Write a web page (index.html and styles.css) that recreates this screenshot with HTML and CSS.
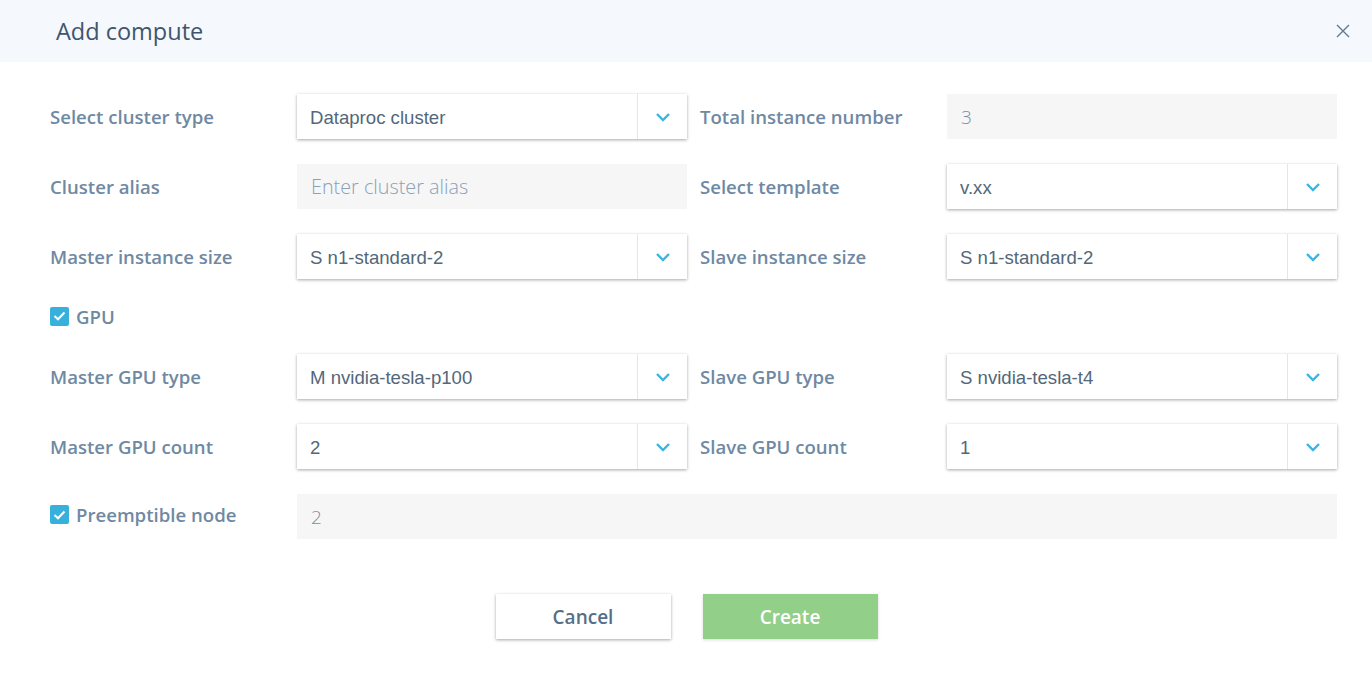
FILE: index.html
```html
<!DOCTYPE html>
<html>
<head>
<meta charset="utf-8">
<link rel="stylesheet" href="styles.css">
</head>
<body>
<div class="dialog">
  <header class="head">
    <h1 class="title">Add compute</h1>
    <button class="close" aria-label="Close">
      <svg width="16" height="16" viewBox="0 0 16 16"><path d="M2 2L14 14M14 2L2 14" stroke="#5f7a92" stroke-width="1.4" fill="none"/></svg>
    </button>
  </header>
  <div class="form">
    <div class="row">
      <div class="field"><label class="label">Select cluster type</label>
        <div class="select"><span class="val">Dataproc cluster</span><span class="arrow"><svg width="16" height="10" viewBox="0 0 16 10"><path d="M2 2L8 8L14 2" stroke="#3ab4e0" stroke-width="2.4" fill="none"/></svg></span></div></div>
      <div class="field"><label class="label">Total instance number</label>
        <div class="input disabled">3</div></div>
    </div>
    <div class="row">
      <div class="field"><label class="label">Cluster alias</label>
        <div class="input placeholder">Enter cluster alias</div></div>
      <div class="field"><label class="label">Select template</label>
        <div class="select"><span class="val">v.xx</span><span class="arrow"><svg width="16" height="10" viewBox="0 0 16 10"><path d="M2 2L8 8L14 2" stroke="#3ab4e0" stroke-width="2.4" fill="none"/></svg></span></div></div>
    </div>
    <div class="row">
      <div class="field"><label class="label">Master instance size</label>
        <div class="select"><span class="val">S n1-standard-2</span><span class="arrow"><svg width="16" height="10" viewBox="0 0 16 10"><path d="M2 2L8 8L14 2" stroke="#3ab4e0" stroke-width="2.4" fill="none"/></svg></span></div></div>
      <div class="field"><label class="label">Slave instance size</label>
        <div class="select"><span class="val">S n1-standard-2</span><span class="arrow"><svg width="16" height="10" viewBox="0 0 16 10"><path d="M2 2L8 8L14 2" stroke="#3ab4e0" stroke-width="2.4" fill="none"/></svg></span></div></div>
    </div>
    <div class="check-row">
      <span class="check"><svg width="13" height="10" viewBox="0 0 13 10"><path d="M1.5 5L5 8.3L11.5 1.5" stroke="#fff" stroke-width="2" fill="none"/></svg></span>
      <span class="label">GPU</span>
    </div>
    <div class="row">
      <div class="field"><label class="label">Master GPU type</label>
        <div class="select"><span class="val">M nvidia-tesla-p100</span><span class="arrow"><svg width="16" height="10" viewBox="0 0 16 10"><path d="M2 2L8 8L14 2" stroke="#3ab4e0" stroke-width="2.4" fill="none"/></svg></span></div></div>
      <div class="field"><label class="label">Slave GPU type</label>
        <div class="select"><span class="val">S nvidia-tesla-t4</span><span class="arrow"><svg width="16" height="10" viewBox="0 0 16 10"><path d="M2 2L8 8L14 2" stroke="#3ab4e0" stroke-width="2.4" fill="none"/></svg></span></div></div>
    </div>
    <div class="row">
      <div class="field"><label class="label">Master GPU count</label>
        <div class="select"><span class="val">2</span><span class="arrow"><svg width="16" height="10" viewBox="0 0 16 10"><path d="M2 2L8 8L14 2" stroke="#3ab4e0" stroke-width="2.4" fill="none"/></svg></span></div></div>
      <div class="field"><label class="label">Slave GPU count</label>
        <div class="select"><span class="val">1</span><span class="arrow"><svg width="16" height="10" viewBox="0 0 16 10"><path d="M2 2L8 8L14 2" stroke="#3ab4e0" stroke-width="2.4" fill="none"/></svg></span></div></div>
    </div>
    <div class="row wide">
      <div class="check-label">
        <span class="check"><svg width="13" height="10" viewBox="0 0 13 10"><path d="M1.5 5L5 8.3L11.5 1.5" stroke="#fff" stroke-width="2" fill="none"/></svg></span>
        <span class="label">Preemptible node</span>
      </div>
      <div class="input disabled">2</div>
    </div>
  </div>
  <div class="actions">
    <button class="btn cancel">Cancel</button>
    <button class="btn create">Create</button>
  </div>
</div>
</body>
</html>
```
FILE: styles.css
```css
* { box-sizing: border-box; }
html, body { margin: 0; padding: 0; background: #fff; }
body { font-family: "Open Sans", "Noto Sans", sans-serif; width: 1372px; height: 678px; overflow: hidden; }
.dialog { width: 1372px; }
.head {
  height: 62px;
  background: #f5f8fc;
  display: flex;
  align-items: center;
  justify-content: space-between;
  padding: 0 21px 0 56px;
}
.title { margin: 0; font-size: 23.5px; font-weight: 500; color: #3f556d; }
.close { border: 0; background: none; padding: 0; width: 16px; height: 16px; display: flex; }
.form { padding: 32px 35px 0 50px; display: flex; flex-direction: column; gap: 25px; }
.row { display: flex; gap: 13px; height: 45px; }
.row.wide { gap: 0; }
.field { display: flex; align-items: center; width: 637px; }
.label { width: 247px; flex: none; font-size: 18.6px; font-weight: 600; color: #6f89a3; }
.select, .input { width: 390px; height: 45px; display: flex; align-items: center; }
.select {
  background: #fff;
  box-shadow: 0 1px 3px rgba(0,0,0,0.35);
}
.val { flex: 1; padding: 3px 0 0 13px; font-family: "Liberation Sans", Arial, sans-serif; font-size: 18.6px; color: #53677a; }
.arrow { width: 50px; height: 45px; border-left: 1px solid #e6e6e6; display: flex; align-items: center; justify-content: center; }
.input { background: #f6f6f6; padding-left: 14px; font-size: 19px; font-weight: 300; color: #7a8ea8; }
.input.placeholder { color: #8ba0b6; font-size: 19.8px; }
.row.wide .input { width: 1040px; }
.check-row { display: flex; align-items: center; height: 20px; margin: 2px 0 3px; }
.check-label { display: flex; align-items: center; width: 247px; flex: none; padding-bottom: 4px; }
.check-label .label, .check-row .label { width: auto; }
.check {
  width: 19px; height: 19px; border-radius: 2px; background: #38b0dc;
  display: flex; align-items: center; justify-content: center; margin-right: 7px; flex: none;
}
.actions { display: flex; justify-content: center; gap: 32px; padding-top: 55px; padding-left: 1px; }
.btn {
  width: 175px; height: 45px; border: 0; font-family: "Open Sans", sans-serif;
  font-size: 19px; font-weight: 600;
}
.cancel { background: #fff; color: #576f86; box-shadow: 0 1px 3px rgba(0,0,0,0.35); }
.create { background: #92cf89; color: #fff; box-shadow: 0 1px 3px rgba(0,0,0,0.15); }
```
